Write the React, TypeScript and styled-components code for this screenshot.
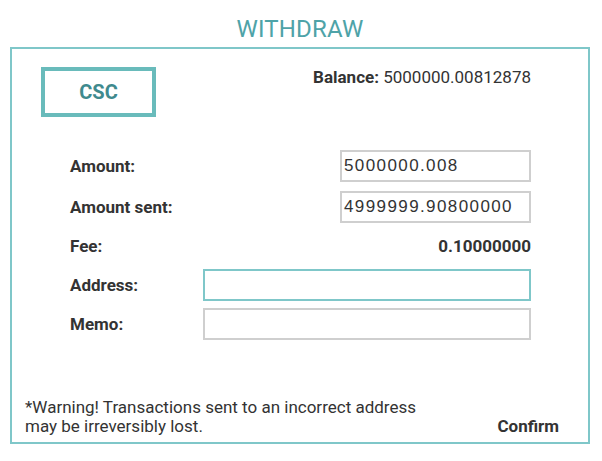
import React from "react";
import styled, { createGlobalStyle } from "styled-components";

const Global = createGlobalStyle`
  html, body { margin: 0; padding: 0; background: #fff; }
  body { font-family: Roboto, "Liberation Sans", sans-serif; color: #333; }
  * { box-sizing: border-box; }
`;

const Page = styled.div`
  width: 602px;
  padding: 15px 0 0 10px;
  display: flex;
  flex-direction: column;
`;

const Title = styled.h1`
  margin: 0 0 4px;
  width: 580px;
  text-align: center;
  font-size: 24px;
  line-height: 28px;
  font-weight: 400;
  color: #4ea3a8;
  letter-spacing: 0.2px;
`;

const Panel = styled.div`
  width: 580px;
  height: 397px;
  border: 2px solid #7fc7c9;
  display: flex;
  flex-direction: column;
`;

const Header = styled.div`
  display: flex;
  justify-content: space-between;
  align-items: flex-start;
  padding: 18px 57px 0 29px;
`;

const CoinBox = styled.div`
  width: 115px;
  height: 50px;
  border: 4px solid #69bbbb;
  display: flex;
  align-items: center;
  justify-content: center;
  font-size: 20px;
  font-weight: 700;
  color: #3f8a8e;
`;

const Balance = styled.div`
  font-size: 17px;
  line-height: 19px;
  padding-top: 1px;
  color: #333;
  b { font-weight: 700; }
`;

const Form = styled.div`
  display: flex;
  flex-direction: column;
  padding: 33px 57px 0 58px;
`;

const Row = styled.div<{ $mt?: number; $h?: number }>`
  display: flex;
  align-items: center;
  justify-content: space-between;
  height: ${(p) => p.$h ?? 32}px;
  margin-top: ${(p) => p.$mt ?? 0}px;
`;

const Label = styled.span`
  font-size: 17px;
  font-weight: 700;
  color: #333;
`;

const Field = styled.div<{ $w: number; $active?: boolean }>`
  width: ${(p) => p.$w}px;
  height: 32px;
  border: 2px solid ${(p) => (p.$active ? "#7fc7c9" : "#cfcfcf")};
  padding: 0 2px;
  display: flex;
  align-items: center;
  font-family: "Liberation Sans", Arial, sans-serif;
  font-size: 17px;
  letter-spacing: 1.4px;
  color: #333;
`;

const Value = styled.span`
  font-size: 17px;
  font-weight: 700;
  color: #333;
`;

const Footer = styled.div`
  margin-top: auto;
  display: flex;
  justify-content: space-between;
  align-items: flex-end;
  padding: 0 29px 6px 13px;
`;

const Warning = styled.p`
  margin: 0;
  font-size: 17px;
  line-height: 19px;
  color: #333;
`;

const Confirm = styled.button`
  border: none;
  background: none;
  padding: 0;
  font-family: Roboto, sans-serif;
  font-size: 17px;
  line-height: 19px;
  font-weight: 700;
  color: #333;
  cursor: pointer;
`;

export default function App() {
  return (
    <>
      <Global />
      <Page>
        <Title>WITHDRAW</Title>
        <Panel>
          <Header>
            <CoinBox>CSC</CoinBox>
            <Balance>
              <b>Balance:</b> 5000000.00812878
            </Balance>
          </Header>
          <Form>
            <Row>
              <Label>Amount:</Label>
              <Field $w={191}>5000000.008</Field>
            </Row>
            <Row $mt={9}>
              <Label>Amount sent:</Label>
              <Field $w={191}>4999999.90800000</Field>
            </Row>
            <Row $mt={9} $h={28}>
              <Label>Fee:</Label>
              <Value>0.10000000</Value>
            </Row>
            <Row $mt={9}>
              <Label>Address:</Label>
              <Field $w={328} $active />
            </Row>
            <Row $mt={7}>
              <Label>Memo:</Label>
              <Field $w={328} />
            </Row>
          </Form>
          <Footer>
            <Warning>
              *Warning! Transactions sent to an incorrect address
              <br />
              may be irreversibly lost.
            </Warning>
            <Confirm>Confirm</Confirm>
          </Footer>
        </Panel>
      </Page>
    </>
  );
}
